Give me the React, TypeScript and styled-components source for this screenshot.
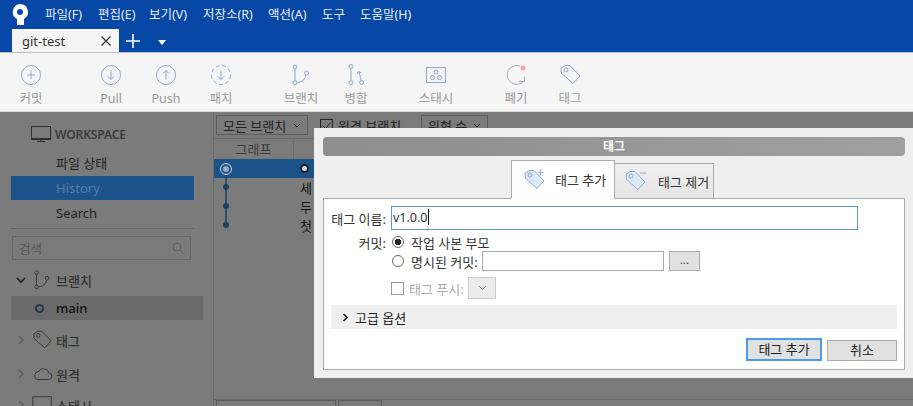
import React from "react";
import styled, { createGlobalStyle } from "styled-components";

const Global = createGlobalStyle`
  html, body { margin: 0; padding: 0; width: 913px; height: 406px; overflow: hidden; background: #7b7b7b; }
  * { box-sizing: border-box; }
  body { font-family: "Noto Sans", "Noto Sans CJK KR", sans-serif; font-size: 13px; }
`;

const Page = styled.div`
  position: relative; width: 913px; height: 406px; overflow: hidden;
  display: flex; flex-direction: column; background: #7b7b7b;
`;
const Header = styled.div`background: #0747a6; height: 52px; flex: none;`;
const MenuBar = styled.div`display: flex; align-items: center; height: 27px; padding-left: 11px;`;
const Logo = styled.svg`width: 18px; height: 22px; margin-right: 16px; flex: none;`;
const MenuItem = styled.span<{ $w: number }>`
  color: #e6edf7; font-size: 12.5px; width: ${p => p.$w}px; white-space: nowrap;
`;
const TabRow = styled.div`display: flex; align-items: flex-end; height: 25px; padding-left: 12px;`;
const Tab = styled.div`
  width: 107px; height: 23px; background: #f5f5f5; color: #333; font-size: 13px;
  display: flex; align-items: center; justify-content: space-between; padding: 0 7px 0 10px;
`;
const TabTool = styled.svg<{ $left: number; $bottom: number }>`
  margin-left: ${p => p.$left}px; margin-bottom: ${p => p.$bottom}px; flex: none;
`;

const Toolbar = styled.div`
  flex: none; height: 60px; background: #f5f5f5; border-top: 1px solid #b9bcc2; border-bottom: 1px solid #d8d8d8;
  display: flex; padding-left: 6px; align-items: flex-start;
`;
const ToolItem = styled.div<{ $gap: number }>`
  width: 50px; margin-left: ${p => p.$gap}px; display: flex; flex-direction: column; align-items: center;
  padding-top: 10px; color: #9a9a9a; font-size: 12.5px; line-height: 16px; white-space: nowrap;
`;
const ToolIcon = styled.svg`width: 24px; height: 24px; margin-bottom: 4px; flex: none;`;

const Main = styled.div`flex: 1; display: flex; min-height: 0;`;
const Sidebar = styled.div`
  width: 214px; flex: none; border-right: 1px solid #676767; padding: 10px 0 0 11px; background: #7b7b7b;
  display: flex; flex-direction: column; overflow: hidden;
  & > * { flex: none; }
`;
const WorkspaceRow = styled.div`
  display: flex; align-items: center; gap: 4px; height: 24px; padding-left: 20px; color: #3a3a3a;
  font-weight: 600; font-size: 12px; letter-spacing: -0.1px;
`;
const NavItem = styled.div<{ $active?: boolean; $top?: number }>`
  width: 183px; height: 24px; line-height: 24px; padding-left: 45px; margin-top: ${p => p.$top ?? 0}px;
  background: ${p => (p.$active ? "#1a5289" : "transparent")};
  color: ${p => (p.$active ? "#5b7ea6" : "#1f1f1f")}; font-size: 13px;
`;
const SideRule = styled.div`width: 183px; height: 1px; background: #686868; margin-top: 3px;`;
const SearchBox = styled.div`
  width: 179px; height: 24px; margin: 7px 0 0 1px; border: 1px solid #686868; padding: 0 6px;
  display: flex; align-items: center; justify-content: space-between; color: #555; font-size: 12.5px;
`;
const GroupRow = styled.div<{ $top: number }>`
  display: flex; align-items: center; height: 24px; margin-top: ${p => p.$top}px; padding-left: 5px;
  color: #333; font-size: 13px; font-weight: 500;
`;
const Arrow = styled.svg`width: 10px; height: 10px; flex: none; margin-right: 5px;`;
const GroupIcon = styled.svg`width: 22px; height: 22px; flex: none; margin-right: 3px;`;
const BranchRow = styled.div`
  width: 192px; height: 24px; margin-top: 4px; background: #6a6a6a; color: #111; display: flex; align-items: center;
  padding-left: 24px; gap: 12px; font-weight: 500; font-size: 13px;
`;
const Dot = styled.span<{ $fill?: boolean }>`
  width: 9px; height: 9px; border: 2px solid ${p => (p.$fill ? "#16202c" : "#2c3547")}; border-radius: 50%; flex: none;
  background: ${p => (p.$fill ? "#d9dde2" : "transparent")};
`;

const Center = styled.div`flex: 1; display: flex; flex-direction: column; min-width: 0;`;
const FilterBar = styled.div`height: 26px; flex: none; display: flex; align-items: flex-start; padding: 3px 0 0 2px; color: #222;`;
const Drop = styled.div<{ $w: number }>`
  width: ${p => p.$w}px; height: 20px; border: 1px solid #5c5c5c; display: flex; align-items: center; justify-content: space-between;
  padding: 0 6px; font-size: 13px; white-space: nowrap; color: #222;
`;
const FilterCheck = styled.label`display: flex; align-items: center; gap: 5px; height: 20px; width: 89px; margin: 0 12px 0 12px; font-size: 13px; white-space: nowrap;`;
const CheckMark = styled.svg`width: 13px; height: 13px; flex: none;`;
const ColHead = styled.div`
  height: 21px; flex: none; display: flex; border-top: 1px solid #6d6d6d; color: #3a3a3a; font-size: 13px; line-height: 20px;
`;
const GraphHead = styled.div`width: 80px; text-align: center; border-right: 1px solid #6d6d6d;`;
const GraphArea = styled.div`flex: 1; position: relative; display: flex; flex-direction: column;`;
const CommitRow = styled.div<{ $sel?: boolean }>`
  height: 19px; flex: none; background: ${p => (p.$sel ? "#1a5289" : "transparent")}; color: #111; display: flex; align-items: center;
  padding-left: 86px; font-size: 13px;
`;
const GraphSvg = styled.svg`position: absolute; left: 0; top: 0; width: 30px; height: 80px;`;
const Spacer = styled.div`flex: 1;`;
const BottomBar = styled.div`
  height: 7px; flex: none; border-top: 1px solid #676767; display: flex; padding-left: 2px; gap: 2px;
`;
const BottomTab = styled.div<{ $w: number }>`width: ${p => p.$w}px; border: 1px solid #5c5c5c; border-bottom: 0;`;

const Dialog = styled.div`
  position: absolute; left: 314px; top: 128px; width: 599px; height: 250px; background: #efefef;
  padding: 9px 8px 8px 9px; display: flex; flex-direction: column; color: #222;
`;
const DialogTitle = styled.div`
  height: 19px; flex: none; border-radius: 4px; background: linear-gradient(90deg, #8e8e8e, #a0a0a0); color: #fff;
  font-size: 12px; font-weight: 700; text-align: center; line-height: 19px;
`;
const TabStrip = styled.div`height: 43px; flex: none; display: flex; align-items: flex-end; justify-content: center; margin-bottom: -1px; position: relative; z-index: 1; padding-right: 3px;`;
const DTab = styled.div<{ $active?: boolean }>`
  height: ${p => (p.$active ? 39 : 36)}px; width: ${p => (p.$active ? 104 : 99)}px;
  border: 1px solid #aaa; border-bottom: ${p => (p.$active ? "1px solid #fff" : "1px solid #aaa")};
  border-left-width: ${p => (p.$active ? 1 : 0)}px;
  background: ${p => (p.$active ? "#fff" : "linear-gradient(#f0f0f0, #e4e4e4)")};
  display: flex; align-items: center; gap: ${p => (p.$active ? 9 : 11)}px; padding-left: ${p => (p.$active ? 10 : 8)}px; font-size: 13px; color: #333; white-space: nowrap;
`;
const TabIcon = styled.svg`width: 24px; height: 24px; flex: none;`;
const Panel = styled.div`
  flex: 1; background: #fff; border: 1px solid #aaa; padding: 7px; display: flex; flex-direction: column;
`;
const NameRow = styled.div`display: flex; align-items: center; height: 24px;`;
const FieldLabel = styled.div`width: 55px; text-align: right; flex: none; font-size: 13px; white-space: nowrap; color: #333;`;
const NameInput = styled.div`
  width: 467px; height: 24px; margin-left: 5px; border: 1px solid #5b9bc8; padding: 0 0 2px 1px; font-size: 12.5px; color: #333;
  display: flex; align-items: center;
`;
const Caret = styled.span`width: 1px; height: 16px; background: #111;`;
const RadioRow = styled.div<{ $top: number }>`display: flex; align-items: center; height: 20px; margin-top: ${p => p.$top}px;`;
const Radio = styled.span<{ $on?: boolean }>`
  width: 12px; height: 12px; border-radius: 50%; border: 1px solid #666; margin-left: ${p => (p.$on ? 6 : 1)}px; margin-right: 7px; flex: none;
  background: ${p => (p.$on ? "radial-gradient(circle, #222 0 3px, #fff 3.5px)" : "#fff")};
`;
const RadioIndent = styled.div`width: 60px; flex: none;`;
const RadioText = styled.span`font-size: 13px; color: #333; white-space: nowrap;`;
const NamedText = styled(RadioText)`width: 68px; flex: none;`;
const CommitInput = styled.div`width: 182px; height: 20px; border: 1px solid #aaa; margin-left: 3px; flex: none;`;
const DotsButton = styled.div`
  width: 31px; height: 20px; margin-left: 5px; background: #e1e1e1; border: 1px solid #adadad; text-align: center; line-height: 16px; font-size: 11px; color: #333;
`;
const PushRow = styled.div`display: flex; align-items: center; height: 22px; margin-top: 6px; padding-left: 60px; color: #aaa; font-size: 13px;`;
const PushBox = styled.span`width: 13px; height: 13px; border: 1px solid #999; flex: none; margin-right: 5px;`;
const PushLabel = styled.span`width: 54px; flex: none; white-space: nowrap;`;
const PushSelect = styled.div`
  width: 28px; height: 22px; margin-left: 5px; background: #ececec; border: 1px solid #ccc; display: flex; align-items: center; justify-content: center;
`;
const Advanced = styled.div`
  height: 24px; margin-top: 6px; background: #efefef; display: flex; align-items: center; gap: 6px; padding-left: 11px; font-size: 13px; color: #222; flex: none;
`;
const ActionRow = styled.div`display: flex; justify-content: flex-end; align-items: flex-end; height: 23px; margin-top: 9px; gap: 5px;`;
const PrimaryButton = styled.div`
  width: 76px; height: 23px; background: #e1e1e1; border: 2px solid #4a9be8; text-align: center; line-height: 18px; font-size: 13px; color: #222;
`;
const CancelButton = styled.div`
  width: 70px; height: 21px; background: #e1e1e1; border: 1px solid #adadad; text-align: center; line-height: 18px; font-size: 13px; color: #222;
`;

const blue = "#8fa8cf";
const I = { fill: "none", stroke: blue, strokeWidth: 1 } as const;

const Branch = ({ c = blue }: { c?: string }) => (
  <>
    <circle cx="6" cy="4" r="2" fill="none" stroke={c} />
    <circle cx="6" cy="19.5" r="2" fill="none" stroke={c} />
    <circle cx="17.5" cy="10" r="2" fill="none" stroke={c} />
    <path d="M6 6v11.5M8 19.5c5 0 8.5-3.5 9-7.5" fill="none" stroke={c} />
  </>
);
const TagShape = ({ c = blue, fill = "none" }: { c?: string; fill?: string }) => (
  <>
    <path d="M3 5.5 7 2.5h5L22 13l-7 7.5L3.5 10.5z" fill={fill} stroke={c} />
    <circle cx="8" cy="7" r="2" fill="none" stroke={c} />
  </>
);

const menus: [string, number][] = [["파일(F)", 53], ["편집(E)", 51], ["보기(V)", 54], ["저장소(R)", 65], ["액션(A)", 54], ["도구", 38], ["도움말(H)", 60]];

export default function App() {
  return (
    <Page>
      <Global />
      <Header>
        <MenuBar>
          <Logo viewBox="0 0 18 22">
            <path fillRule="evenodd" d="M9 1a8 8 0 0 1 4 14.9V22H6v-6A8 8 0 0 1 9 1zm0 5a3 3 0 1 0 0 6 3 3 0 0 0 0-6z" fill="#fff" />
          </Logo>
          {menus.map(([m, w]) => <MenuItem key={m} $w={w}>{m}</MenuItem>)}
        </MenuBar>
        <TabRow>
          <Tab>
            git-test
            <svg width="12" height="12" viewBox="0 0 12 12"><path d="M1.5 1.5l9 9M10.5 1.5l-9 9" stroke="#333" strokeWidth="1.2" /></svg>
          </Tab>
          <TabTool width="16" height="16" viewBox="0 0 16 16" $left={6} $bottom={3}><path d="M8 1v14M1 8h14" stroke="#fff" strokeWidth="1.6" /></TabTool>
          <TabTool width="8" height="5" viewBox="0 0 8 5" $left={17} $bottom={7}><path d="M0 0h8L4 5z" fill="#fff" /></TabTool>
        </TabRow>
      </Header>
      <Toolbar>
        <ToolItem $gap={0}><ToolIcon viewBox="0 0 24 24"><circle cx="12" cy="12" r="9.5" {...I} /><path d="M12 8v8M8 12h8" {...I} /></ToolIcon>커밋</ToolItem>
        <ToolItem $gap={30}><ToolIcon viewBox="0 0 24 24"><circle cx="12" cy="12" r="9.5" {...I} /><path d="M12 7.5v9M9 13.5l3 3 3-3" {...I} /></ToolIcon>Pull</ToolItem>
        <ToolItem $gap={5}><ToolIcon viewBox="0 0 24 24"><circle cx="12" cy="12" r="9.5" {...I} /><path d="M12 16.5v-9M9 10.5l3-3 3 3" {...I} /></ToolIcon>Push</ToolItem>
        <ToolItem $gap={5}><ToolIcon viewBox="0 0 24 24"><circle cx="12" cy="12" r="9.5" {...I} strokeDasharray="4 2.5" /><path d="M12 7.5v9M9 13.5l3 3 3-3" {...I} /></ToolIcon>패치</ToolItem>
        <ToolItem $gap={30}><ToolIcon viewBox="0 0 24 24"><Branch /></ToolIcon>브랜치</ToolItem>
        <ToolItem $gap={5}><ToolIcon viewBox="0 0 24 24"><circle cx="7" cy="3.5" r="2" {...I} /><circle cx="7" cy="19.5" r="2" {...I} /><circle cx="17.5" cy="19.5" r="2" {...I} /><path d="M7 5.5v12M17 17.5c0-3-.8-5-2.2-8.5M13 11l1.6-2.5 2.6 1.3" {...I} /></ToolIcon>병합</ToolItem>
        <ToolItem $gap={30}><ToolIcon viewBox="0 0 24 24"><rect x="2.5" y="4.5" width="19" height="15" {...I} /><circle cx="12" cy="9" r="2" {...I} /><circle cx="8.5" cy="14.5" r="2" {...I} /><circle cx="15.5" cy="14.5" r="2" {...I} /></ToolIcon>스태시</ToolItem>
        <ToolItem $gap={30}><ToolIcon viewBox="0 0 24 24"><path d="M16 3A9.5 9.5 0 1 0 20 18" fill="none" stroke="#a9adb3" /><path d="M14.5 18.5h6v-5" fill="none" stroke="#a9adb3" /><circle cx="19" cy="5" r="2.5" fill="#eea99c" /></ToolIcon>폐기</ToolItem>
        <ToolItem $gap={4}><ToolIcon viewBox="0 0 24 24"><TagShape /></ToolIcon>태그</ToolItem>
      </Toolbar>
      <Main>
        <Sidebar>
          <WorkspaceRow>
            <svg width="20" height="18" viewBox="0 0 20 18" fill="none" stroke="#2f2f2f"><rect x="0.5" y="1.5" width="19" height="12" /><path d="M0 14.5h20M6 16.5h8M10 14v2" /></svg>
            WORKSPACE
          </WorkspaceRow>
          <NavItem $top={5}>파일 상태</NavItem>
          <NavItem $active $top={1}>History</NavItem>
          <NavItem $top={1}>Search</NavItem>
          <SideRule />
          <SearchBox>
            검색
            <svg width="12" height="12" viewBox="0 0 12 12" fill="none" stroke="#5f5f5f"><circle cx="5" cy="5" r="4" /><path d="M8 8l3.5 3.5" /></svg>
          </SearchBox>
          <GroupRow $top={8}>
            <Arrow viewBox="0 0 10 10"><path d="M1 3l4 4 4-4" fill="none" stroke="#222" strokeWidth="1.7" /></Arrow>
            <GroupIcon viewBox="0 0 24 24"><Branch c="#333" /></GroupIcon>브랜치
          </GroupRow>
          <BranchRow><Dot />main</BranchRow>
          <GroupRow $top={8}>
            <Arrow viewBox="0 0 10 10"><path d="M3 1l4 4-4 4" fill="none" stroke="#5c5c5c" strokeWidth="1.5" /></Arrow>
            <GroupIcon viewBox="0 0 24 24"><TagShape c="#333" /></GroupIcon>태그
          </GroupRow>
          <GroupRow $top={10}>
            <Arrow viewBox="0 0 10 10"><path d="M3 1l4 4-4 4" fill="none" stroke="#5c5c5c" strokeWidth="1.5" /></Arrow>
            <GroupIcon viewBox="0 0 24 24"><path d="M6 18h13a3.5 3.5 0 0 0 .5-7 6 6 0 0 0-11-2A5 5 0 0 0 6 18z" fill="none" stroke="#333" /></GroupIcon>원격
          </GroupRow>
          <GroupRow $top={7}>
            <Arrow viewBox="0 0 10 10"><path d="M3 1l4 4-4 4" fill="none" stroke="#5c5c5c" strokeWidth="1.5" /></Arrow>
            <GroupIcon viewBox="0 0 24 24"><rect x="2" y="3" width="20" height="17" fill="none" stroke="#333" /></GroupIcon>스태시
          </GroupRow>
        </Sidebar>
        <Center>
          <FilterBar>
            <Drop $w={92}>모든 브랜치
              <svg width="8" height="5" viewBox="0 0 8 5"><path d="M1 1l3 3 3-3" fill="none" stroke="#222" /></svg>
            </Drop>
            <FilterCheck>
              <CheckMark viewBox="0 0 13 13"><rect x="0.5" y="0.5" width="12" height="12" fill="none" stroke="#222" /><path d="M2.5 6.5l3 3 5-6" fill="none" stroke="#222" /></CheckMark>
              원격 브랜치
            </FilterCheck>
            <Drop $w={67}>위형 수
              <svg width="8" height="5" viewBox="0 0 8 5"><path d="M1 1l3 3 3-3" fill="none" stroke="#222" /></svg>
            </Drop>
          </FilterBar>
          <ColHead><GraphHead>그래프</GraphHead></ColHead>
          <GraphArea>
            <CommitRow $sel><Dot $fill /></CommitRow>
            <CommitRow>세</CommitRow>
            <CommitRow>두</CommitRow>
            <CommitRow>첫</CommitRow>
            <GraphSvg viewBox="0 0 30 80">
              <circle cx="12" cy="10" r="5.5" fill="none" stroke="#cfd8e3" />
              <circle cx="12" cy="10" r="3" fill="#9eadbd" />
              <path d="M12 16v48" stroke="#1c4067" strokeWidth="1.5" />
              <circle cx="12" cy="28" r="3" fill="#1c4067" />
              <circle cx="12" cy="47" r="3" fill="#1c4067" />
              <circle cx="12" cy="66" r="3" fill="#1c4067" />
            </GraphSvg>
            <Spacer />
          </GraphArea>
          <BottomBar><BottomTab $w={120} /><BottomTab $w={44} /></BottomBar>
        </Center>
      </Main>
      <Dialog>
        <DialogTitle>태그</DialogTitle>
        <TabStrip>
          <DTab $active>
            <TabIcon viewBox="0 0 24 24"><TagShape fill="#dce9f7" /><path d="M18.5 1.5v6M15.5 4.5h6" stroke="#8fa8cf" /></TabIcon>
            태그 추가
          </DTab>
          <DTab>
            <TabIcon viewBox="0 0 24 24"><TagShape fill="#dce9f7" /><path d="M17 4h6" stroke="#8fa8cf" /></TabIcon>
            태그 제거
          </DTab>
        </TabStrip>
        <Panel>
          <NameRow>
            <FieldLabel>태그 이름:</FieldLabel>
            <NameInput>v1.0.0<Caret /></NameInput>
          </NameRow>
          <RadioRow $top={2}>
            <FieldLabel>커밋:</FieldLabel>
            <Radio $on />
            <RadioText>작업 사본 부모</RadioText>
          </RadioRow>
          <RadioRow $top={-1}>
            <RadioIndent />
            <Radio />
            <NamedText>명시된 커밋:</NamedText>
            <CommitInput />
            <DotsButton>...</DotsButton>
          </RadioRow>
          <PushRow>
            <PushBox />
            <PushLabel>태그 푸시:</PushLabel>
            <PushSelect><svg width="9" height="6" viewBox="0 0 9 6"><path d="M1 1l3.5 3.5L8 1" fill="none" stroke="#999" /></svg></PushSelect>
          </PushRow>
          <Advanced>
            <svg width="7" height="9" viewBox="0 0 7 9"><path d="M1.5 1l3.5 3.5L1.5 8" fill="none" stroke="#222" strokeWidth="1.7" /></svg>
            고급 옵션
          </Advanced>
          <ActionRow>
            <PrimaryButton>태그 추가</PrimaryButton>
            <CancelButton>취소</CancelButton>
          </ActionRow>
        </Panel>
      </Dialog>
    </Page>
  );
}
